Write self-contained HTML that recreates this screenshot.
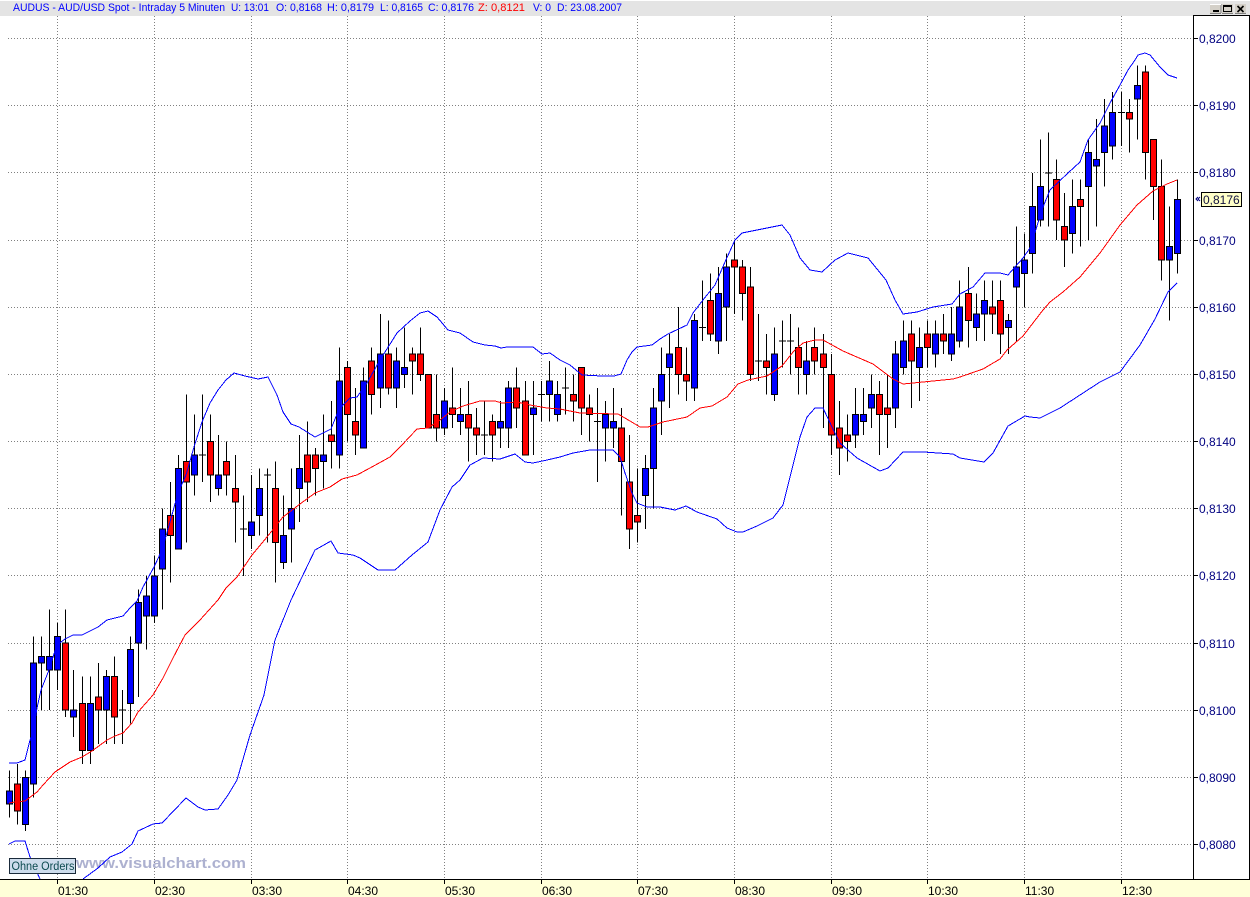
<!DOCTYPE html>
<html>
<head>
<meta charset="utf-8">
<title>AUDUS</title>
<style>
html,body{margin:0;padding:0;background:#fff;width:1250px;height:897px;overflow:hidden}
svg{display:block;position:absolute;left:0;top:0}
text{font-family:"Liberation Sans",sans-serif;font-size:12px}
.ns{vector-effect:non-scaling-stroke;stroke-width:1}
</style>
</head>
<body>
<svg width="1250" height="897" viewBox="0 0 1250 897">
<rect x="0" y="0" width="1250" height="897" fill="#fff"/>
<rect x="0" y="1" width="1250" height="15" fill="#e4e4e4"/>
<!-- header -->
<g font-size="11" fill="#0000ff">
<text x="13" y="11" style="font-size:11px" textLength="212" lengthAdjust="spacingAndGlyphs">AUDUS - AUD/USD Spot - Intraday 5 Minuten</text>
<text x="231" y="11" style="font-size:11px" textLength="38" lengthAdjust="spacingAndGlyphs">U: 13:01</text>
<text x="276" y="11" style="font-size:11px" textLength="46" lengthAdjust="spacingAndGlyphs">O: 0,8168</text>
<text x="327" y="11" style="font-size:11px" textLength="47" lengthAdjust="spacingAndGlyphs">H: 0,8179</text>
<text x="380" y="11" style="font-size:11px" textLength="43" lengthAdjust="spacingAndGlyphs">L: 0,8165</text>
<text x="428" y="11" style="font-size:11px" textLength="46" lengthAdjust="spacingAndGlyphs">C: 0,8176</text>
<text x="478" y="11" style="font-size:11px" fill="#ff0000" textLength="47" lengthAdjust="spacingAndGlyphs">Z: 0,8121</text>
<text x="533" y="11" style="font-size:11px" textLength="18" lengthAdjust="spacingAndGlyphs">V: 0</text>
<text x="557" y="11" style="font-size:11px" textLength="65" lengthAdjust="spacingAndGlyphs">D: 23.08.2007</text>
</g>
<!-- window buttons -->
<g shape-rendering="crispEdges">
<rect x="1210" y="4" width="11" height="9" fill="#d4d0c8"/><path d="M1210 13.5H1221M1221 4V13" stroke="#808080" fill="none"/><path d="M1210 4.5H1221" stroke="#fff"/><rect x="1213" y="10" width="6" height="2" fill="#000"/>
<rect x="1222" y="4" width="11" height="9" fill="#d4d0c8"/><path d="M1222 13.5H1233" stroke="#808080"/><rect x="1223.5" y="5.5" width="8" height="6" fill="none" stroke="#000"/><rect x="1223" y="5" width="9" height="2" fill="#000"/>
<rect x="1235" y="4" width="11" height="9" fill="#d4d0c8"/><path d="M1235 13.5H1246" stroke="#808080"/>
</g>
<path d="M1237.5 6L1243.5 12M1243.5 6L1237.5 12" stroke="#000" stroke-width="1.6" fill="none"/>
<!-- grid -->
<g stroke="#808080" stroke-dasharray="1 2" fill="none" shape-rendering="crispEdges">
<path d="M8 38.5H1193M8 105.5H1193M8 172.5H1193M8 240.5H1193M8 307.5H1193M8 374.5H1193M8 441.5H1193M8 508.5H1193M8 575.5H1193M8 643.5H1193M8 710.5H1193M8 777.5H1193M8 844.5H1193"/>
<path d="M57.5 16V879M154.5 16V879M251.5 16V879M347.5 16V879M444.5 16V879M541.5 16V879M637.5 16V879M734.5 16V879M831.5 16V879M927.5 16V879M1024.5 16V879M1121.5 16V879"/>
</g>
<!-- watermark -->
<text x="76" y="868" fill="#adb1d0" font-weight="bold" style="font-size:15px" textLength="170" lengthAdjust="spacingAndGlyphs">www.visualchart.com</text>
<!-- candles (price ticks minus 8000 mapped on y) -->
<g transform="matrix(1 0 0 -6.717 0 1381.9)" shape-rendering="crispEdges">
<path class="ns" fill="none" stroke="#000" d="M9.5 91V84M17.5 92V83M25.5 91V82M33.5 111V87M41.5 111V100M49.5 115V100M57.5 113V103M65.5 115V99M73.5 106V96M82.5 105V92M90.5 105V92M98.5 107V95M106.5 106V95M114.5 108V95M122.5 103V95M119 100H126M130.5 111V98M138.5 118V102M146.5 120V109M154.5 123V113M162.5 130V115M170.5 134V119M178.5 138V124M186.5 147V125M194.5 144V132M202.5 147V134M199 138H206M210.5 144V131M218.5 141V132M226.5 140V132M235.5 138V125M243.5 132V120M240 127H247M251.5 135V124M259.5 136V126M267.5 136V125M264 135H271M275.5 137V119M283.5 132V121M291.5 136V122M299.5 141V128M307.5 143V131M315.5 139V132M323.5 144V133M331.5 146V136M339.5 154V136M347.5 152V140M355.5 148V138M363.5 151V139M371.5 154V144M380.5 159V145M388.5 158V147M396.5 154V145M404.5 157V148M412.5 154V147M420.5 157V149M428.5 150V142M436.5 150V140M444.5 148V141M452.5 151V142M460.5 148V141M468.5 149V137M476.5 145V138M484.5 146V138M481 141H488M492.5 144V137M500.5 146V139M508.5 149V139M516.5 151V142M525.5 149V138M533.5 149V138M541.5 149V143M538 147H545M549.5 152V143M557.5 149V143M565.5 151V144M562 148H569M573.5 150V143M581.5 151V141M589.5 147V140M597.5 148V134M594 143H601M605.5 146V137M613.5 148V139M621.5 145V129M629.5 141V124M637.5 136V125M645.5 138V127M653.5 148V130M661.5 154V141M669.5 156V145M678.5 160V147M686.5 154V146M694.5 159V146M702.5 164V155M699 157H706M710.5 165V155M718.5 166V153M726.5 168V155M734.5 170V159M742.5 167V158M750.5 166V149M758.5 159V149M755 152H762M766.5 156V147M774.5 157V146M782.5 158V151M779 155H786M790.5 159V150M787 155H794M798.5 157V147M806.5 155V147M814.5 157V150M823.5 156V142M831.5 153V138M839.5 146V135M847.5 144V137M855.5 148V139M863.5 148V141M871.5 150V142M879.5 149V138M887.5 150V139M895.5 155V142M903.5 158V150M911.5 158V145M919.5 157V146M927.5 158V151M935.5 158V151M943.5 159V153M951.5 160V152M959.5 164V154M968.5 166V154M976.5 162V155M984.5 164V155M992.5 164V156M1000.5 164V153M1008.5 159V153M1016.5 172V155M1024.5 171V160M1032.5 180V165M1040.5 185V172M1048.5 186V172M1045 180H1052M1056.5 182V170M1064.5 177V166M1072.5 179V168M1080.5 179V169M1088.5 185V170M1096.5 188V172M1104.5 191V178M1112.5 192V182M1121.5 192V184M1118 189H1125M1129.5 191V183M1137.5 196V185M1145.5 196V179M1153.5 185V173M1161.5 182V164M1169.5 175V158M1177.5 179V165"/>
<path class="ns" fill="#0000ff" stroke="#000" d="M6.5 88h6V86h-6zM22.5 90h6V83h-6zM30.5 107h6V89h-6zM38.5 108h6V107h-6zM46.5 108h6V106h-6zM54.5 111h6V106h-6zM70.5 100h6V99h-6zM87.5 101h6V94h-6zM103.5 105h6V100h-6zM127.5 109h6V101h-6zM135.5 116h6V110h-6zM143.5 117h6V114h-6zM151.5 120h6V114h-6zM159.5 127h6V121h-6zM175.5 136h6V124h-6zM191.5 138h6V135h-6zM215.5 135h6V133h-6zM248.5 128h6V126h-6zM256.5 133h6V129h-6zM280.5 126h6V122h-6zM288.5 130h6V127h-6zM296.5 136h6V133h-6zM320.5 138h6V137h-6zM336.5 149h6V138h-6zM360.5 149h6V139h-6zM377.5 153h6V148h-6zM393.5 152h6V148h-6zM401.5 151h6V150h-6zM441.5 146h6V142h-6zM457.5 144h6V143h-6zM497.5 143h6V142h-6zM505.5 148h6V142h-6zM530.5 145h6V144h-6zM546.5 149h6V147h-6zM554.5 147h6V144h-6zM602.5 144h6V142h-6zM610.5 143h6V142h-6zM642.5 136h6V132h-6zM650.5 145h6V136h-6zM658.5 150h6V146h-6zM666.5 153h6V151h-6zM691.5 158h6V148h-6zM715.5 162h6V155h-6zM723.5 166h6V160h-6zM771.5 153h6V147h-6zM803.5 152h6V150h-6zM852.5 144h6V141h-6zM860.5 144h6V143h-6zM868.5 147h6V145h-6zM892.5 153h6V145h-6zM900.5 155h6V151h-6zM916.5 154h6V151h-6zM932.5 156h6V153h-6zM948.5 156h6V153h-6zM956.5 160h6V155h-6zM973.5 159h6V157h-6zM981.5 161h6V159h-6zM1005.5 158h6V157h-6zM1013.5 166h6V163h-6zM1021.5 167h6V165h-6zM1029.5 175h6V168h-6zM1037.5 178h6V173h-6zM1069.5 175h6V171h-6zM1085.5 183h6V178h-6zM1093.5 182h6V181h-6zM1101.5 187h6V183h-6zM1109.5 189h6V184h-6zM1134.5 193h6V191h-6zM1166.5 169h6V167h-6zM1174.5 176h6V168h-6z"/>
<path class="ns" fill="#ff0000" stroke="#000" d="M14.5 89h6V85h-6zM62.5 110h6V100h-6zM79.5 101h6V94h-6zM95.5 102h6V100h-6zM111.5 105h6V99h-6zM167.5 129h6V126h-6zM183.5 137h6V134h-6zM207.5 140h6V135h-6zM223.5 137h6V135h-6zM232.5 133h6V131h-6zM272.5 133h6V125h-6zM304.5 138h6V134h-6zM312.5 138h6V136h-6zM328.5 141h6V140h-6zM344.5 151h6V144h-6zM352.5 143h6V141h-6zM368.5 152h6V147h-6zM385.5 153h6V148h-6zM409.5 153h6V152h-6zM417.5 153h6V150h-6zM425.5 150h6V142h-6zM433.5 144h6V142h-6zM449.5 145h6V144h-6zM465.5 144h6V142h-6zM473.5 142h6V141h-6zM489.5 143h6V141h-6zM513.5 148h6V145h-6zM522.5 146h6V138h-6zM570.5 147h6V146h-6zM578.5 151h6V145h-6zM586.5 145h6V144h-6zM618.5 142h6V137h-6zM626.5 134h6V127h-6zM634.5 129h6V128h-6zM675.5 154h6V150h-6zM683.5 150h6V149h-6zM707.5 161h6V156h-6zM731.5 167h6V166h-6zM739.5 166h6V162h-6zM747.5 163h6V150h-6zM763.5 152h6V151h-6zM795.5 154h6V151h-6zM811.5 154h6V152h-6zM820.5 153h6V151h-6zM828.5 150h6V141h-6zM836.5 142h6V139h-6zM844.5 141h6V140h-6zM876.5 147h6V144h-6zM884.5 145h6V144h-6zM908.5 156h6V152h-6zM924.5 156h6V154h-6zM940.5 156h6V155h-6zM965.5 162h6V158h-6zM989.5 160h6V159h-6zM997.5 161h6V156h-6zM1053.5 179h6V173h-6zM1061.5 172h6V170h-6zM1077.5 176h6V175h-6zM1126.5 189h6V188h-6zM1142.5 195h6V183h-6zM1150.5 185h6V178h-6zM1158.5 178h6V167h-6z"/>
</g>
<!-- bands -->
<g fill="none" stroke-width="1" shape-rendering="crispEdges">
<polyline stroke="#0000ff" points="9,763 17,763 25,760 30,740 33,733 37,708 41,690 49,670 53,657 57,645 65,639 73,635 82,635 98,627 107,620 115,618 123,616 130,608 137,601 143,587 154,567 162,550 170,522 178,493 186,475 194,447 202,422 210,403 218,390 226,380 234,373 245,376 258,379 268,377 277,395 283,412 291,424 299,427 315,437 323,433 331,429 337,414 343,405 350,398 357,397 367,383 380,360 397,333 410,321 420,313 428,311 437,317 448,330 460,333 473,342 485,345 495,346 501,348 507,347 520,347 533,347 542,354 550,353 560,360 570,365 582,375 602,376 614,376 621,374 627,360 632,352 637,347 652,345 660,339 668,334 687,325 693,313 703,300 715,285 725,262 735,240 742,233 762,229 782,225 790,235 800,258 810,270 822,272 835,260 848,253 868,258 886,280 895,300 903,314 917,312 933,307 952,304 960,294 973,287 985,273 1000,273 1008,275 1015,267 1023,258 1030,248 1043,207 1050,190 1068,173 1080,162 1088,140 1100,123 1110,103 1120,85 1128,70 1135,60 1138,55 1145,53 1150,55 1160,67 1168,75 1177,78"/>
<polyline stroke="#0000ff" points="9,844 15,841 25,841 30,857 40,879"/>
<polyline stroke="#0000ff" points="83,879 98,868 110,857 122,852 132,844 138,831 153,824 162,823 186,798 198,807 205,810 218,809 228,795 237,780 250,735 264,695 275,640 291,600 302,577 315,550 331,541 338,553 353,555 360,558 378,570 395,570 412,555 428,542 440,510 452,487 460,480 470,465 483,458 500,459 515,454 525,462 533,463 547,460 560,457 573,453 590,450 613,450 620,457 625,473 632,493 637,503 647,507 660,507 675,510 686,506 697,512 717,519 727,528 737,532 743,532 757,526 773,518 783,505 790,477 800,437 807,417 815,408 823,408 832,427 840,443 857,458 880,471 888,468 903,452 923,452 953,454 960,458 984,462 993,453 1008,426 1025,416 1030,417 1040,418 1060,408 1080,395 1100,382 1120,372 1140,345 1155,319 1168,292 1177,283"/>
<polyline stroke="#ff0000" points="9,803 15,802 25,801 37,792 43,785 55,772 70,762 82,757 92,751 107,740 115,736 123,733 132,723 138,712 153,695 163,678 173,658 185,635 200,620 218,600 226,588 237,577 252,555 267,537 283,517 300,504 315,493 330,487 342,479 357,475 370,468 390,457 402,445 417,429 428,428 440,420 450,412 463,406 480,401 495,401 502,403 517,402 530,405 547,408 560,409 580,413 618,414 630,421 640,427 648,427 663,422 687,417 700,408 712,406 727,397 738,384 748,380 767,376 782,366 793,352 803,343 815,340 823,340 843,351 873,364 893,379 903,384 923,382 953,379 960,377 983,369 1000,359 1007,350 1023,336 1043,310 1050,302 1063,292 1080,277 1100,253 1120,225 1137,205 1153,191 1167,184 1177,180"/>
</g>
<!-- Ohne Orders -->
<rect x="9.5" y="858.5" width="66" height="15" fill="#cddcec" stroke="#1a2a3a" shape-rendering="crispEdges"/>
<text x="11.5" y="870" fill="#0c4a50" style="font-size:11.5px" textLength="63" lengthAdjust="spacingAndGlyphs">Ohne Orders</text>
<!-- frames -->
<rect x="0" y="880" width="1250" height="17" fill="#ffffd8"/>
<rect x="1194" y="16" width="55" height="863" fill="#fff"/>
<g stroke="#000" fill="none" shape-rendering="crispEdges">
<path d="M0 879.5H1250"/>
<path d="M1193.5 15V880M1193 15.5H1250M1249.5 15V880"/>
<path d="M1193 38.5H1198M1193 105.5H1198M1193 172.5H1198M1193 240.5H1198M1193 307.5H1198M1193 374.5H1198M1193 441.5H1198M1193 508.5H1198M1193 575.5H1198M1193 643.5H1198M1193 710.5H1198M1193 777.5H1198M1193 844.5H1198"/>
<path d="M57.5 880V884M154.5 880V884M251.5 880V884M347.5 880V884M444.5 880V884M541.5 880V884M637.5 880V884M734.5 880V884M831.5 880V884M927.5 880V884M1024.5 880V884M1121.5 880V884"/>
</g>
<!-- price axis -->
<g fill="#000080">
<text x="1199" y="43">0,8200</text>
<text x="1199" y="110">0,8190</text>
<text x="1199" y="177">0,8180</text>
<text x="1199" y="245">0,8170</text>
<text x="1199" y="312">0,8160</text>
<text x="1199" y="379">0,8150</text>
<text x="1199" y="446">0,8140</text>
<text x="1199" y="513">0,8130</text>
<text x="1199" y="580">0,8120</text>
<text x="1199" y="648">0,8110</text>
<text x="1199" y="715">0,8100</text>
<text x="1199" y="782">0,8090</text>
<text x="1199" y="849">0,8080</text>
</g>
<!-- last price -->
<rect x="1201.5" y="192.5" width="40" height="14" fill="#ffffc8" stroke="#000" shape-rendering="crispEdges"/>
<text x="1203" y="204" fill="#101040">0,8176</text>
<path d="M1198 197L1196 199L1198 201M1200 197L1198 199L1200 201" stroke="#000080" fill="none" stroke-width="1"/>
<!-- time axis -->
<g fill="#000">
<text x="58" y="895">01:30</text>
<text x="155" y="895">02:30</text>
<text x="252" y="895">03:30</text>
<text x="348" y="895">04:30</text>
<text x="445" y="895">05:30</text>
<text x="542" y="895">06:30</text>
<text x="638" y="895">07:30</text>
<text x="735" y="895">08:30</text>
<text x="832" y="895">09:30</text>
<text x="928" y="895">10:30</text>
<text x="1025" y="895">11:30</text>
<text x="1122" y="895">12:30</text>
</g>
</svg>
</body>
</html>
